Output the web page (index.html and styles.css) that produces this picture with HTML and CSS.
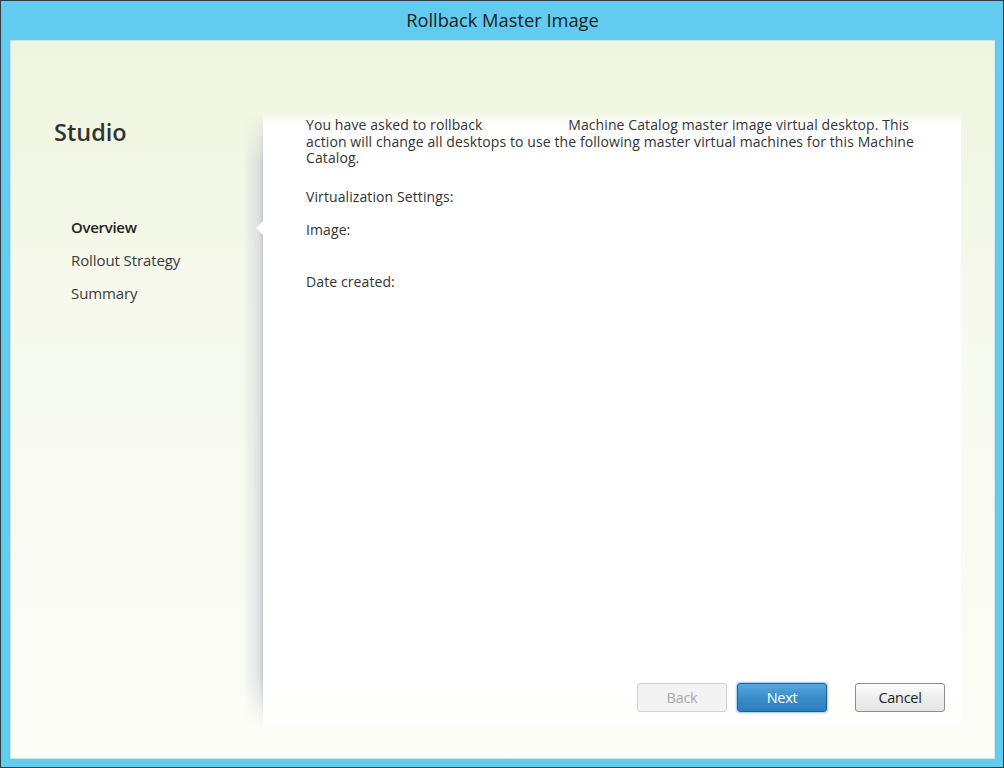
FILE: index.html
```html
<!DOCTYPE html>
<html lang="en">
<head>
    <meta charset="UTF-8">
    <title>Rollback Master Image</title>
    <link rel="stylesheet" href="styles.css">
</head>
<body>
    <div class="frame">
        <div class="title-bar">Rollback Master Image</div>
        <div class="content">
            <div class="sidebar">
                <h1 class="product">Studio</h1>
                <ul class="steps">
                    <li class="active">Overview</li>
                    <li>Rollout Strategy</li>
                    <li>Summary</li>
                </ul>
            </div>
            <div class="panel">
                <div class="panel-body">
                    <p class="intro">You have asked to <span class="name-gap">rollback</span> Machine Catalog master image virtual desktop. This action will change all desktops to use the following master virtual machines for this Machine Catalog.</p>
                    <p class="field">Virtualization Settings:</p>
                    <p class="field">Image:</p>
                    <p class="field field-gap">Date created:</p>
                </div>
                <div class="buttons">
                    <button type="button" class="btn btn-disabled" disabled>Back</button>
                    <button type="button" class="btn btn-primary">Next</button>
                    <button type="button" class="btn btn-cancel">Cancel</button>
                </div>
            </div>
        </div>
    </div>
</body>
</html>
```

FILE: styles.css
```css
html, body {
    margin: 0;
    padding: 0;
}
body {
    background-color: #2d3b44;
    padding: 1px;
    font-family: "Open Sans", "Noto Sans", sans-serif;
    color: #333;
}
.frame {
    width: 1002px;
    height: 766px;
    box-sizing: border-box;
    background-color: #62cbf0;
    padding: 0 8px 8px 9px;
    display: flex;
    flex-direction: column;
}
.title-bar {
    height: 39px;
    line-height: 38px;
    text-align: center;
    font-size: 18.3px;
    color: #1c1c1c;
    flex-shrink: 0;
}
.content {
    flex: 1;
    display: flex;
    background: linear-gradient(to bottom, #eff5df 0%, #f6f9ec 35%, #fcfdf7 100%);
    border: 1px solid #c9e6ee;
    border-right-color: #cfe9f0;
}
.sidebar {
    width: 252px;
    flex-shrink: 0;
    padding: 77px 0 0 43px;
    box-sizing: border-box;
}
.product {
    margin: 0;
    font-size: 23.5px;
    font-weight: 600;
    line-height: 28px;
    color: #333;
}
.steps {
    list-style: none;
    margin: 65px 0 0 17px;
    padding: 0;
}
.steps li {
    font-size: 15px;
    line-height: 33px;
    color: #3a3a3a;
    letter-spacing: -0.1px;
}
.steps li.active {
    font-weight: 600;
    color: #222;
    letter-spacing: -0.3px;
}
.panel {
    position: relative;
    width: 698px;
    margin: 70px 0 33px 0;
    display: flex;
    flex-direction: column;
    background: linear-gradient(to bottom, rgba(255,255,255,0) 0, #fff 14px, #fff 92%, rgba(255,255,255,0.6) 100%);
}
.panel::before {
    content: "";
    position: absolute;
    left: -20px;
    top: 4px;
    bottom: 0;
    width: 20px;
    background: linear-gradient(to right, rgba(200,205,215,0) 0%, rgba(190,196,208,0.45) 80%, rgba(175,182,196,0.7) 100%);
    -webkit-mask-image: linear-gradient(to bottom, transparent 0, #000 50px, #000 92%, transparent 100%);
    mask-image: linear-gradient(to bottom, transparent 0, #000 50px, #000 92%, transparent 100%);
}
.panel::after {
    content: "";
    position: absolute;
    left: -7px;
    top: 110px;
    border-top: 7px solid transparent;
    border-bottom: 7px solid transparent;
    border-right: 7px solid #fff;
}
.panel-body {
    flex: 1;
    padding: 6px 30px 0 43px;
}
.panel-body p {
    margin: 0;
    font-size: 14px;
    line-height: 16.5px;
    color: #333;
    letter-spacing: 0.1px;
}
.name-gap {
    padding-right: 82px;
}
.intro {
    margin-bottom: 22px !important;
}
.field {
    margin-bottom: 16.5px !important;
}
.field-gap {
    margin-top: 36px !important;
}
.buttons {
    display: flex;
    padding: 0 16px 13px 0;
    justify-content: flex-end;
}
.btn {
    width: 90px;
    height: 29px;
    font-family: "Open Sans", "Noto Sans", sans-serif;
    font-size: 14.5px;
    border-radius: 3px;
    padding: 0;
    letter-spacing: -0.3px;
}
.btn-disabled {
    background: #f3f3f3;
    border: 1px solid #d2d2d2;
    color: #a9a9a9;
    margin-right: 10px;
}
.btn-primary {
    background: linear-gradient(to bottom, #55a9dc 0%, #3b8ecb 50%, #2c7dbe 100%);
    border: 1px solid #1d5f96;
    box-shadow: 0 0 2px 1px rgba(90,170,220,0.6);
    color: #fff;
    margin-right: 28px;
}
.btn-cancel {
    background: linear-gradient(to bottom, #fdfdfd 0%, #eeeeee 50%, #e4e4e4 100%);
    border: 1px solid #8c8c8c;
    color: #1f1f1f;
}
```
